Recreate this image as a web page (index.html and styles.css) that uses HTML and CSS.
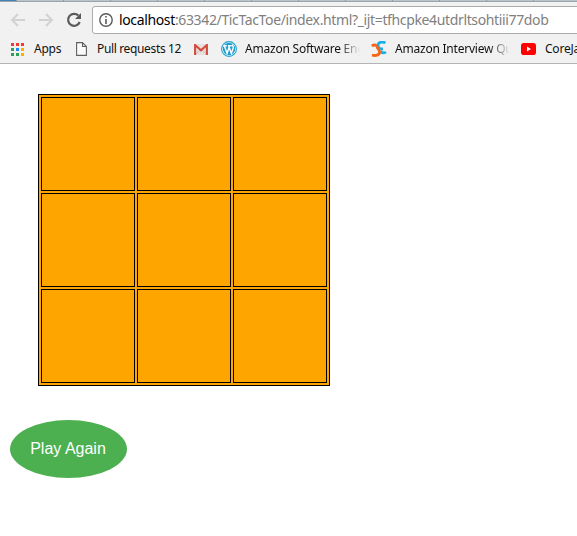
FILE: index.html
```html
<!DOCTYPE html>
<html lang="en">
<head>
<meta charset="utf-8">
<title>TicTacToe</title>
<link rel="stylesheet" href="styles.css">
</head>
<body>
<header class="browser">
  <div class="tabstrip"><i></i><i></i><i></i><i></i><i></i><i></i><i></i><i></i><i></i><i></i><i></i><i></i></div>
  <nav class="toolbar">
    <svg class="nav-icon" width="16" height="16" viewBox="0 0 16 16"><path d="M15 8H2M8 2L2 8l6 6" fill="none" stroke="#d2d2d2" stroke-width="2"/></svg>
    <svg class="nav-icon" width="16" height="16" viewBox="0 0 16 16"><path d="M1 8h13M8 2l6 6-6 6" fill="none" stroke="#d2d2d2" stroke-width="2"/></svg>
    <svg class="nav-icon" width="16" height="16" viewBox="0 0 16 16"><path d="M12.4 3.6A6 6 0 1 0 13.7 10" fill="none" stroke="#5a5a5a" stroke-width="2.2"/><path d="M15 1v6H9z" fill="#5a5a5a"/></svg>
    <div class="address">
      <svg width="14" height="14" viewBox="0 0 14 14"><circle cx="7" cy="7" r="6.2" fill="none" stroke="#5a5a5a" stroke-width="1.4"/><path d="M6.2 3h1.6v1.6H6.2zM6.2 6h1.6v5H6.2z" fill="#5a5a5a"/></svg>
      <span class="url"><b>localhost</b>:63342/TicTacToe/index.html?_ijt=tfhcpke4utdrltsohtiii77dob</span>
    </div>
  </nav>
  <nav class="bookmarks">
    <a class="apps"><svg width="13" height="13" viewBox="0 0 13 13"><path d="M0 0h3v3H0zM5 0h3v3H5zM10 0h3v3h-3z" fill="#f33a30"/><path d="M0 5h3v3H0zM0 10h3v3H0zM5 10h3v3H5z" fill="#2d9f58"/><path d="M5 5h3v3H5z" fill="#1f88f5"/><path d="M10 5h3v3h-3zM10 10h3v3h-3z" fill="#fbb000"/></svg><span>Apps</span></a>
    <a class="pulls"><svg width="11" height="14" viewBox="0 0 11 14"><path d="M.6.6H6.5L10.4 4.5v8.9H.6zM6.5.6v3.9h3.9" fill="#fafafa" stroke="#606060" stroke-width="1.1"/></svg><span>Pull requests 12</span></a>
    <a class="mail"><svg width="14" height="11" viewBox="0 0 14 11"><path d="M1 0h12v11H1z" fill="#e5e1df"/><path d="M2 10l4-4M12 10L8 6" stroke="#c8c4c2"/><path d="M1.1 11V1L7 6.3 12.9 1v10" fill="none" stroke="#d54b3d" stroke-width="2.1"/></svg></a>
    <a class="wide wordpress"><svg width="16" height="16" viewBox="0 0 16 16"><circle cx="8" cy="8" r="7.4" fill="#fff" stroke="#20a0cf" stroke-width="1.1"/><circle cx="8" cy="8" r="6.2" fill="#20a0cf"/><path d="M2.2 4.8h3.6M7 4.8h3.7M3.4 5l2.7 7.3L8.2 6M7.6 5l2.8 7.3 1.8-5.4c.5-1.5-.9-2-.5-3.4" fill="none" stroke="#fff" stroke-width="1.4"/></svg><span class="fade">Amazon Software Eng</span></a>
    <a class="wide careercup"><svg width="16" height="16" viewBox="0 0 16 16"><path d="M14.5 1.7C10.5.6 7 1.3 7 4.3c0 3 2.6 4 5 3.6M15 11c-1.5 1.2-4.2 1.2-5.5-.6" fill="none" stroke="#16afe8" stroke-width="2.8"/><path d="M.8 4.9C3.5 3.2 6 4 6.3 6.3 6.5 8 8.6 8.6 8.6 11c0 3-4 4.2-7.6 3" fill="none" stroke="#f76416" stroke-width="2.8"/></svg><span class="fade">Amazon Interview Qu</span></a>
    <a class="video"><svg width="15" height="12" viewBox="0 0 15 12"><rect width="15" height="12" rx="2.8" fill="#f00"/><path d="M6 3.6v4.8L10 6z" fill="#fff"/></svg><span>CoreJa</span></a>
  </nav>
</header>
<main>
  <div class="board"><div></div><div></div><div></div><div></div><div></div><div></div><div></div><div></div><div></div></div>
  <button class="again">Play Again</button>
</main>
</body>
</html>
```
FILE: styles.css
```css
* { box-sizing: border-box; }
body { margin: 0; background: #fff; overflow: hidden; }
svg { display: block; flex: none; }
.browser { height: 64px; background: #f1f1f1; border-bottom: 1px solid #b4b4b4; font-family: "Noto Sans", sans-serif; overflow: hidden; }
.tabstrip { display: flex; height: 2px; background: #b7c5cc; border-bottom: 1px solid #9ba5aa; }
.tabstrip i { flex: none; width: 47px; border-right: 1px solid #8b989f; }
.tabstrip i:first-child { width: 17px; background: #3f83b5; }
.toolbar { display: flex; align-items: center; height: 36px; padding-left: 10px; }
.nav-icon { margin-right: 12px; }
.address { display: flex; align-items: center; flex: none; width: 500px; height: 28px; background: #fff; border: 1px solid #ababab; border-radius: 3px; padding-left: 6px; margin-left: -2px; }
.url { margin-left: 6px; font-size: 14px; line-height: 20px; color: #808080; white-space: nowrap; letter-spacing: -0.36px; }
.url b { font-weight: 400; color: #000; }
.bookmarks { display: flex; height: 22px; padding-left: 11px; font-size: 12px; line-height: 18px; color: #111; }
.bookmarks a { display: flex; align-items: center; flex: none; white-space: nowrap; }
.bookmarks span { letter-spacing: -0.22px; }
.bookmarks .apps { width: 65px; gap: 10px; }
.bookmarks .pulls { width: 118px; gap: 10px; }
.bookmarks .pulls span { letter-spacing: -0.35px; }
.mail { width: 27px; }
.wide { width: 150px; gap: 8px; }
.wide span { width: 115px; overflow: hidden; }
.fade { -webkit-mask-image: linear-gradient(90deg, #000 82%, transparent); mask-image: linear-gradient(90deg, #000 82%, transparent); }
.video { gap: 9px; }
main { padding: 30px 0 0 10px; }
.board { display: grid; grid-template-columns: repeat(3, 94px); grid-auto-rows: 94px; gap: 2px; width: 292px; padding: 2px; margin-left: 28px; background: orange; border: 1px solid #000; }
.board div { border: 1px solid #000; }
.again { display: block; width: 117px; height: 58px; margin-top: 34px; padding: 0 1px 0 0; border: 0; border-radius: 50%; background: #4caf50; color: #fff; font: 16px "Liberation Sans", sans-serif; }
```
